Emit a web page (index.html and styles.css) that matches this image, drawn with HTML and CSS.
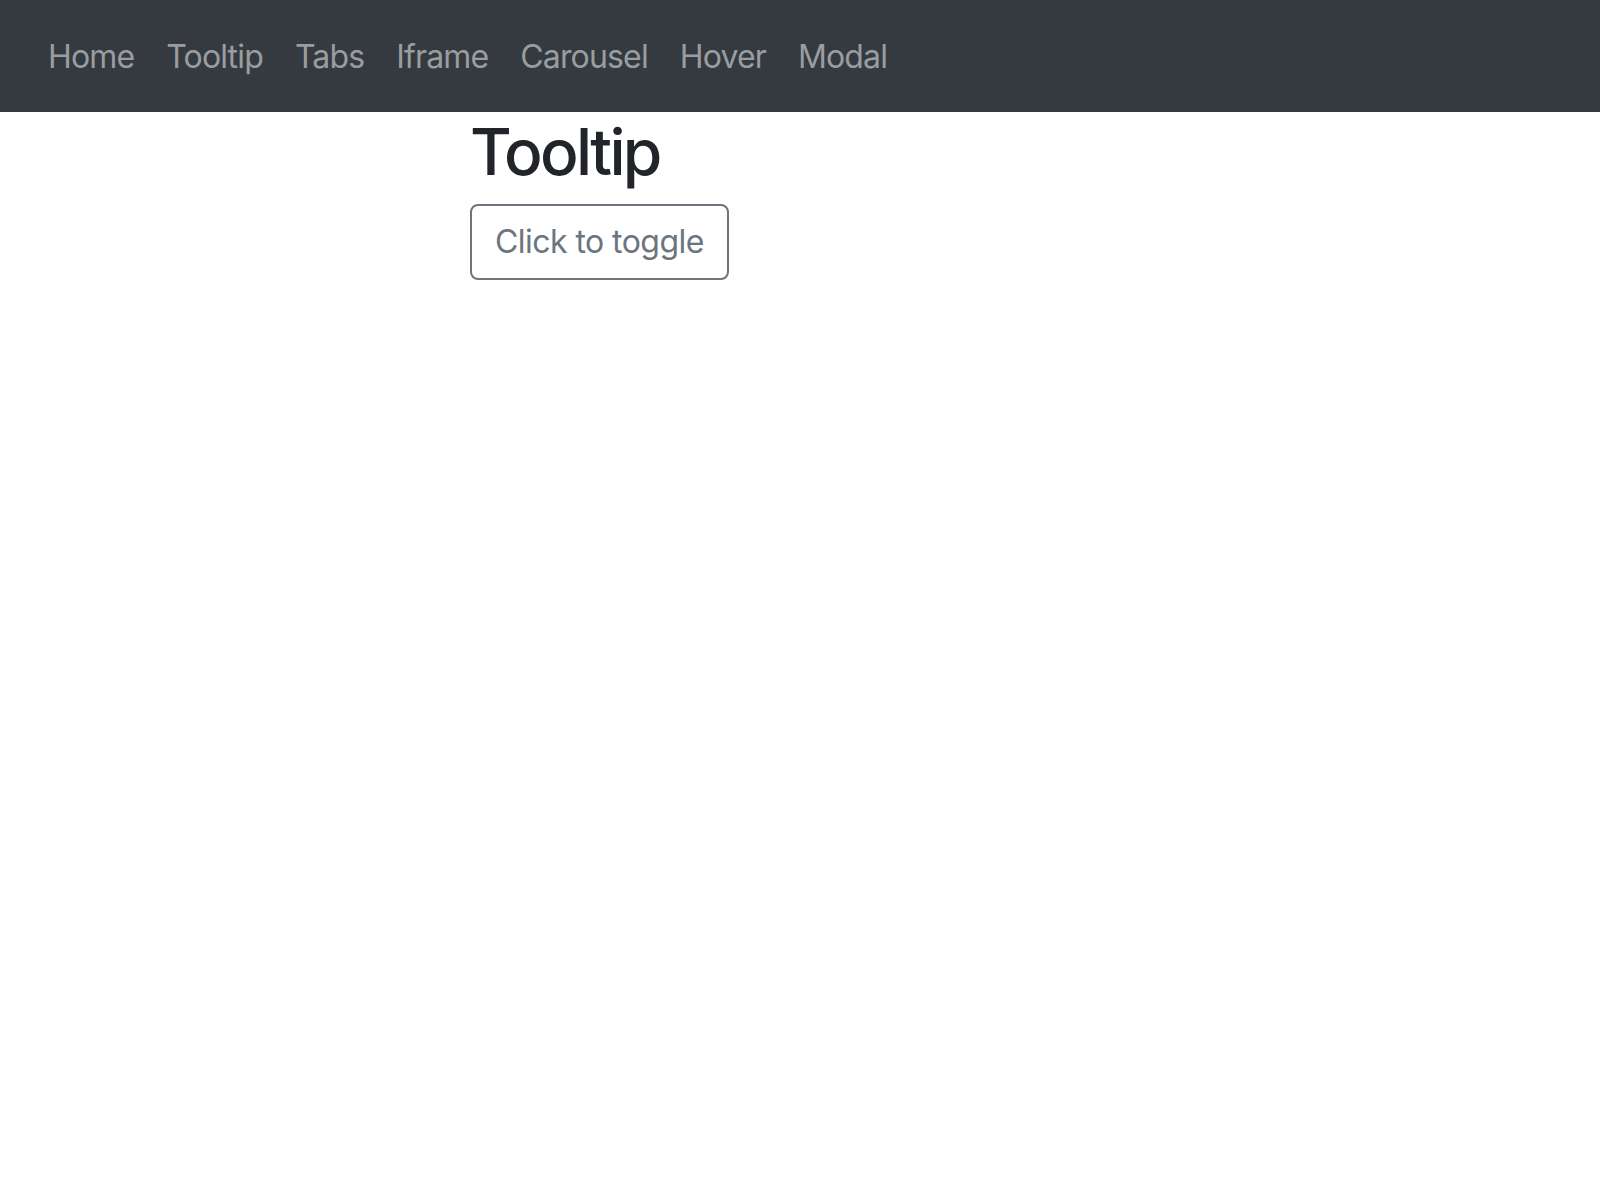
FILE: index.html
```html
<!DOCTYPE html>
<html lang="en">
<head>
<meta charset="utf-8">
<title>Tooltip</title>
<link rel="stylesheet" href="styles.css">
</head>
<body>
<nav class="navbar">
  <ul class="nav">
    <li><a class="nav-link" href="#">Home</a></li>
    <li><a class="nav-link" href="#">Tooltip</a></li>
    <li><a class="nav-link" href="#">Tabs</a></li>
    <li><a class="nav-link" href="#">Iframe</a></li>
    <li><a class="nav-link" href="#">Carousel</a></li>
    <li><a class="nav-link" href="#">Hover</a></li>
    <li><a class="nav-link" href="#">Modal</a></li>
  </ul>
</nav>
<main class="content">
  <h1 class="title">Tooltip</h1>
  <button class="btn-outline" type="button">Click to toggle</button>
</main>
</body>
</html>
```

FILE: styles.css
```css
html, body {
  margin: 0;
  padding: 0;
  background: #fff;
}
body {
  font-family: "Inter", "Roboto", "Liberation Sans", sans-serif;
  color: #212529;
}
.navbar {
  background: #343a40;
  height: 112px;
  padding: 16px 0;
  box-sizing: border-box;
}
.nav {
  list-style: none;
  margin: 0;
  padding: 0 0 0 32px;
  display: flex;
}
.nav-link {
  display: block;
  padding: 17px 16px 15px;
  font-size: 32px;
  line-height: 48px;
  color: #9a9da0;
  text-decoration: none;
  letter-spacing: -0.85px;
}
.content {
  padding-left: 470px;
}
.title {
  margin: 0 0 12px 0;
  font-size: 64px;
  line-height: 80px;
  font-weight: 550;
  letter-spacing: -2.7px;
}
.btn-outline {
  font-family: inherit;
  font-size: 32px;
  line-height: 48px;
  padding: 12px 23px;
  color: #6c757d;
  background: transparent;
  border: 2px solid #6c757d;
  border-radius: 8px;
  letter-spacing: -0.55px;
}
```
